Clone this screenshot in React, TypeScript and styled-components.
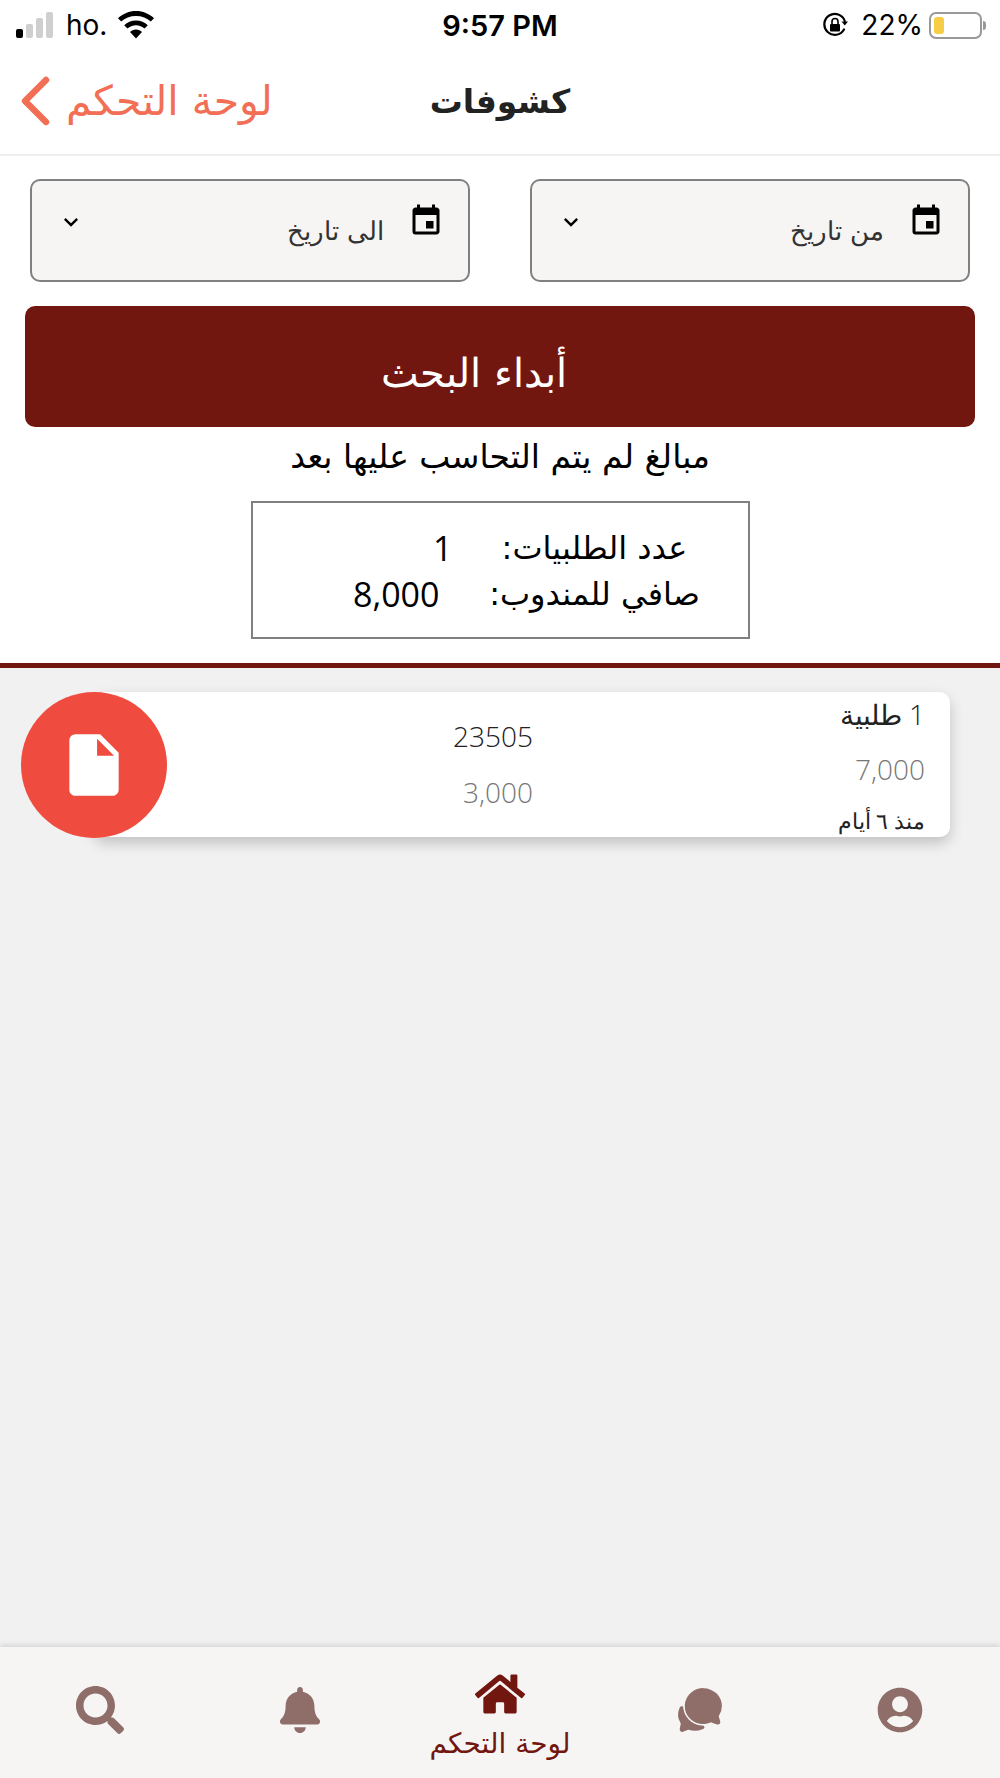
import React from "react";
import styled, { createGlobalStyle } from "styled-components";
import { FaBell, FaHome, FaSearch, FaUserCircle } from "react-icons/fa";
import { IoChatbubbles } from "react-icons/io5";
import { MdEvent, MdInsertDriveFile, MdKeyboardArrowDown } from "react-icons/md";

const ARABIC = `"DejaVu Sans", "Noto Sans", sans-serif`;
const LATIN_LIGHT = `"Open Sans", "DejaVu Sans", sans-serif`;

const GlobalStyle = createGlobalStyle`
  html, body {
    margin: 0;
    padding: 0;
    background: #fff;
  }
  * {
    box-sizing: border-box;
  }
`;

const Page = styled.div`
  width: 1000px;
  height: 1778px;
  display: flex;
  flex-direction: column;
  overflow: hidden;
  background: #fff;
  font-family: ${ARABIC};
`;

const StatusBar = styled.div`
  height: 50px;
  flex: none;
  display: grid;
  grid-template-columns: 1fr auto 1fr;
  align-items: center;
  padding: 0 12px 0 16px;
  font-family: "Inter", "Liberation Sans", sans-serif;
  font-size: 28px;
  color: #000;
`;

const StatusLeft = styled.div`
  display: flex;
  align-items: center;
`;

const StatusRight = styled.div`
  display: flex;
  align-items: center;
  justify-content: flex-end;
`;

const Clock = styled.div`
  font-weight: 600;
  font-size: 29px;
  margin-right: 4px;
`;

const Signal = styled.div`
  display: flex;
  align-items: flex-end;
  gap: 3px;
  height: 26px;
  margin-right: 13px;
`;

const SignalBar = styled.span<{ $h: number; $on?: boolean }>`
  width: 7px;
  height: ${(p) => p.$h}px;
  border-radius: 2px;
  background: ${(p) => (p.$on ? "#000" : "#cfcfcf")};
`;

const Carrier = styled.span`
  margin-right: 11px;
`;

const Percent = styled.span`
  margin: 0 6px 0 13px;
`;

const Battery = styled.div`
  width: 53px;
  height: 27px;
  border: 2px solid #999;
  border-radius: 7px;
  padding: 3px;
  margin-right: 6px;
  position: relative;
  &::after {
    content: "";
    position: absolute;
    right: -6px;
    top: 7px;
    width: 3px;
    height: 9px;
    background: #999;
    border-radius: 0 3px 3px 0;
  }
`;

const BatteryFill = styled.div`
  width: 10px;
  height: 100%;
  border-radius: 3px;
  background: #f8cd46;
`;

const Header = styled.div`
  height: 106px;
  flex: none;
  border-bottom: 2px solid #eeeeee;
  display: grid;
  grid-template-columns: 1fr auto 1fr;
  align-items: center;
  padding: 0 20px 2px;
`;

const BackLink = styled.div`
  display: flex;
  align-items: center;
  gap: 16px;
  color: #f26f55;
  font-size: 41px;
`;

const Title = styled.div`
  font-size: 33px;
  font-weight: 700;
  color: #222;
`;

const Form = styled.div`
  padding: 23px 25px 0;
`;

const DateRow = styled.div`
  display: flex;
  justify-content: space-between;
  padding: 0 5px;
`;

const DateBox = styled.div`
  width: 440px;
  height: 103px;
  background: #f6f5f4;
  border: 2px solid #808080;
  border-radius: 10px;
  display: flex;
  align-items: flex-start;
  padding: 27px 24px 0 25px;
  color: #000;
`;

const DateLabel = styled.div`
  flex: 1;
  font-size: 26px;
  font-weight: 200;
  color: #333;
  padding: 8px 24px 0 0;
`;

const SearchButton = styled.div`
  height: 121px;
  margin-top: 24px;
  border-radius: 10px;
  background: #72170f;
  color: #fff;
  font-size: 40px;
  font-weight: 200;
  padding: 12px 52px 0 0;
  display: flex;
  align-items: center;
  justify-content: center;
`;

const Heading = styled.div`
  margin-top: 10px;
  text-align: center;
  font-size: 33px;
  color: #000;
  line-height: 40px;
`;

const SummaryBox = styled.div`
  width: 499px;
  height: 138px;
  margin: 24px auto 0;
  border: 2px solid #808080;
  display: grid;
  grid-template-columns: 240px 1fr;
  align-content: center;
  grid-row-gap: 6px;
  padding: 2px 33px 0 0;
  font-size: 32px;
  line-height: 40px;
  color: #000;
`;

const SummaryLabel = styled.div`
  text-align: center;
`;

const SummaryValue = styled.div<{ $indent: number }>`
  font-family: ${LATIN_LIGHT};
  font-size: 34px;
  padding-right: ${(p) => p.$indent}px;
`;

const Rule = styled.div`
  height: 5px;
  flex: none;
  margin-top: 24px;
  background: #72170f;
`;

const List = styled.div`
  flex: 1;
  background: #f1f1f2;
  padding: 24px 50px 0 21px;
`;

const ListItem = styled.div`
  display: flex;
`;

const Card = styled.div`
  flex: 1;
  height: 145px;
  background: #fff;
  border-radius: 10px;
  box-shadow: 0 6px 14px rgba(0, 0, 0, 0.2);
  display: grid;
  grid-template-columns: 392px 1fr;
  padding-right: 25px;
`;

const CardColumn = styled.div<{ $top: number; $gap: number }>`
  display: flex;
  flex-direction: column;
  gap: ${(p) => p.$gap}px;
  padding-top: ${(p) => p.$top}px;
`;

const CardText = styled.div<{ $muted?: boolean; $small?: boolean }>`
  font-family: ${LATIN_LIGHT};
  font-weight: 300;
  font-size: ${(p) => (p.$small ? 22 : 28)}px;
  line-height: ${(p) => (p.$small ? 28 : 36)}px;
  color: ${(p) => (p.$muted ? "#777" : "#222")};
`;

const Circle = styled.div`
  flex: none;
  width: 146px;
  height: 146px;
  margin-right: -73px;
  border-radius: 50%;
  background: #ef4c3f;
  color: #fff;
  position: relative;
  display: flex;
  align-items: center;
  justify-content: center;
`;

const TabBar = styled.div`
  height: 131px;
  flex: none;
  background: #f6f5f4;
  box-shadow: 0 -2px 5px rgba(0, 0, 0, 0.12);
  position: relative;
  display: grid;
  grid-template-columns: repeat(5, 200px);
`;

const Tab = styled.div<{ $active?: boolean }>`
  display: flex;
  flex-direction: column;
  align-items: center;
  justify-content: ${(p) => (p.$active ? "flex-start" : "center")};
  padding: ${(p) => (p.$active ? "22px 0 0" : "0 0 6px")};
  color: ${(p) => (p.$active ? "#72170f" : "#8f6e6a")};
`;

const TabLabel = styled.div`
  font-size: 28px;
  line-height: 36px;
  margin-top: 7px;
`;

const Wifi = () => (
  <svg width="36" height="28" viewBox="0 0 36 28" fill="#000">
    <path d="M18 0C11 0 5 2.700 0 7.200l3.200 3.400C7 7 12.200 5 18 5s11 2 14.800 5.600L36 7.200C31 2.700 25 0 18 0z" />
    <path d="M18 9.500c-4.700 0-8.800 1.800-11.800 4.700l3.300 3.400c2.200-2.100 5.200-3.400 8.500-3.400s6.300 1.300 8.500 3.400l3.300-3.400C26.800 11.300 22.700 9.500 18 9.500z" />
    <path d="M18 18.500c-2.400 0-4.500.9-6 2.400l6 6.600 6-6.600c-1.500-1.500-3.600-2.400-6-2.400z" />
  </svg>
);

const RotationLock = () => (
  <svg width="26" height="26" viewBox="0 0 26 26" fill="none">
    <path
      d="M22 17.500A10.500 10.500 0 1 1 22.800 9"
      stroke="#000"
      strokeWidth="2.200"
      strokeLinecap="round"
    />
    <path d="M19.500 9.500h6.500l-3.200 4z" fill="#000" />
    <rect x="8" y="12" width="10" height="7.500" rx="1" fill="#000" />
    <path d="M10 12V9.500a3 3 0 0 1 6 0V12" stroke="#000" strokeWidth="1.600" />
  </svg>
);

const BackChevron = () => (
  <svg width="30" height="50" viewBox="0 0 30 50" fill="none">
    <path
      d="M26 4 L5 25 L26 46"
      stroke="#f26f55"
      strokeWidth="6.500"
      strokeLinecap="round"
      strokeLinejoin="round"
    />
  </svg>
);

const DateField = ({ label }: { label: string }) => (
  <DateBox>
    <MdEvent size={36} style={{ marginTop: -5 }} />
    <DateLabel>{label}</DateLabel>
    <MdKeyboardArrowDown size={28} />
  </DateBox>
);

export default function App() {
  return (
    <Page>
      <GlobalStyle />
      <StatusBar>
        <StatusLeft>
          <Signal>
            <SignalBar $h={9} $on />
            <SignalBar $h={14} />
            <SignalBar $h={20} />
            <SignalBar $h={26} />
          </Signal>
          <Carrier>ho.</Carrier>
          <Wifi />
        </StatusLeft>
        <Clock>9:57 PM</Clock>
        <StatusRight>
          <RotationLock />
          <Percent>22%</Percent>
          <Battery>
            <BatteryFill />
          </Battery>
        </StatusRight>
      </StatusBar>

      <Header>
        <BackLink>
          <BackChevron />
          <span dir="rtl">لوحة التحكم</span>
        </BackLink>
        <Title dir="rtl">كشوفات</Title>
        <span />
      </Header>

      <Form dir="rtl">
        <DateRow>
          <DateField label="من تاريخ" />
          <DateField label="الى تاريخ" />
        </DateRow>
        <SearchButton>أبداء البحث</SearchButton>
        <Heading>مبالغ لم يتم التحاسب عليها بعد</Heading>
        <SummaryBox>
          <SummaryLabel>عدد الطلبيات:</SummaryLabel>
          <SummaryValue $indent={22}>1</SummaryValue>
          <SummaryLabel>صافي للمندوب:</SummaryLabel>
          <SummaryValue $indent={35}>8,000</SummaryValue>
        </SummaryBox>
      </Form>

      <Rule />

      <List dir="rtl">
        <ListItem>
          <Card>
            <CardColumn $top={4} $gap={19}>
              <CardText>1 طلبية</CardText>
              <CardText $muted>7,000</CardText>
              <CardText $small>منذ ٦ أيام</CardText>
            </CardColumn>
            <CardColumn $top={26} $gap={20}>
              <CardText>23505</CardText>
              <CardText $muted>3,000</CardText>
            </CardColumn>
          </Card>
          <Circle>
            <MdInsertDriveFile size={74} />
          </Circle>
        </ListItem>
      </List>

      <TabBar>
        <Tab>
          <FaSearch size={48} />
        </Tab>
        <Tab>
          <FaBell size={46} />
        </Tab>
        <Tab $active>
          <FaHome size={50} />
          <TabLabel dir="rtl">لوحة التحكم</TabLabel>
        </Tab>
        <Tab>
          <IoChatbubbles size={50} />
        </Tab>
        <Tab>
          <FaUserCircle size={46} />
        </Tab>
      </TabBar>
    </Page>
  );
}
